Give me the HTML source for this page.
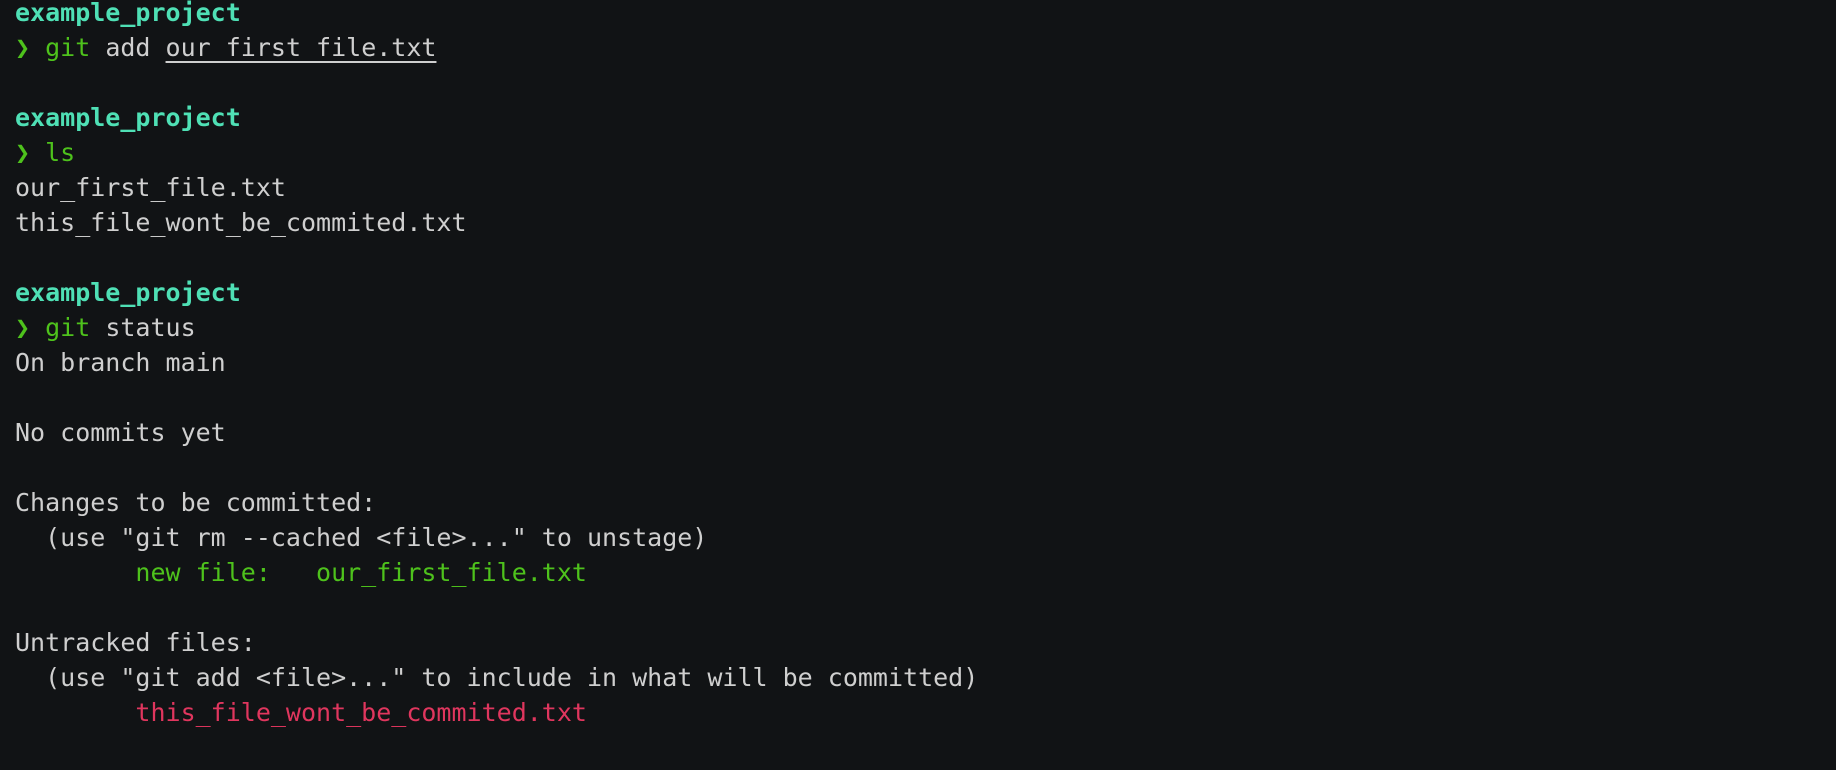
<!DOCTYPE html>
<html><head><meta charset="utf-8"><style>
html,body{margin:0;padding:0;background:#111315;width:1836px;height:770px;overflow:hidden}
pre{margin:-5px 0 0 15px;font-family:"DejaVu Sans Mono","Liberation Mono",monospace;font-size:25px;line-height:35px;color:#cfcfcf}
.p{color:#4fe0b5;font-weight:bold}
.g{color:#4ec21c}
.r{color:#e0365e}
u{text-decoration:underline;text-underline-offset:5px;text-decoration-thickness:2px}
</style></head><body><pre><span class="p">example_project</span>
<span class="g">❯ git</span> add <u>our_first_file.txt</u>

<span class="p">example_project</span>
<span class="g">❯ ls</span>
our_first_file.txt
this_file_wont_be_commited.txt

<span class="p">example_project</span>
<span class="g">❯ git</span> status
On branch main

No commits yet

Changes to be committed:
  (use "git rm --cached &lt;file&gt;..." to unstage)
<span class="g">        new file:   our_first_file.txt</span>

Untracked files:
  (use "git add &lt;file&gt;..." to include in what will be committed)
<span class="r">        this_file_wont_be_commited.txt</span>
</pre></body></html>
